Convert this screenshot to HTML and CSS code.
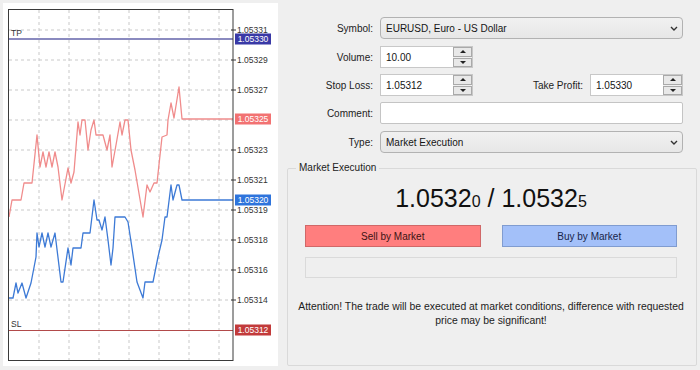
FILE: index.html
```html
<!DOCTYPE html>
<html lang="en">
<head>
<meta charset="utf-8">
<title>Order</title>
<link rel="stylesheet" href="styles.css">
</head>
<body>
<div class="app">
  <div class="chart-panel">
    <svg class="chart" width="275" height="363" viewBox="3 3 275 363" xmlns="http://www.w3.org/2000/svg">
      <g class="grid">
        <line x1="39" y1="10" x2="39" y2="360"/>
        <line x1="69" y1="10" x2="69" y2="360"/>
        <line x1="99" y1="10" x2="99" y2="360"/>
        <line x1="129" y1="10" x2="129" y2="360"/>
        <line x1="159" y1="10" x2="159" y2="360"/>
        <line x1="189" y1="10" x2="189" y2="360"/>
        <line x1="219" y1="10" x2="219" y2="360"/>
        <line x1="9" y1="30" x2="233" y2="30"/>
        <line x1="9" y1="60" x2="233" y2="60"/>
        <line x1="9" y1="90" x2="233" y2="90"/>
        <line x1="9" y1="120" x2="233" y2="120"/>
        <line x1="9" y1="150" x2="233" y2="150"/>
        <line x1="9" y1="180" x2="233" y2="180"/>
        <line x1="9" y1="210" x2="233" y2="210"/>
        <line x1="9" y1="240" x2="233" y2="240"/>
        <line x1="9" y1="270" x2="233" y2="270"/>
        <line x1="9" y1="300" x2="233" y2="300"/>
      </g>
      <line class="tp-line" x1="9" y1="39" x2="233" y2="39"/>
      <line class="sl-line" x1="9" y1="330.5" x2="233" y2="330.5"/>
      <polyline class="ask" points="9,217 12,200 21,200 24,183 32,183 37,135 40,167 43,152 46,167 49,152 52,167 55,152 58,167 62,200 68,168 71,183 74,172 78,122 80,135 82,120 85,120 88,150 91,130 94,120 96,135 103,135 107,150 110,135 112,167 116,145 120,122 122,135 125,120 128,120 131,150 135,170 143,217 147,185 150,192 154,183 157,183 162,137 167,135 168,120 171,103 174,118 179,87 182,119 233,119"/>
      <polyline class="bid" points="9,298 13,298 16,283 18,293 22,283 26,298 31,283 36,257 37,233 39,247 42,233 45,247 48,233 51,247 55,233 61,282 63,282 68,248 71,265 73,248 81,248 83,233 90,233 94,200 97,220 99,220 102,230 105,217 108,240 111,265 113,248 115,217 125,217 128,222 132,248 137,282 143,298 145,282 153,282 158,257 162,240 165,217 167,217 171,185 173,200 177,185 179,185 182,200 233,200"/>
      <rect class="frame" x="8.5" y="9.5" width="224.5" height="351"/>
      <g class="ticks">
        <line x1="231" y1="30" x2="236" y2="30"/>
        <line x1="231" y1="60" x2="236" y2="60"/>
        <line x1="231" y1="90" x2="236" y2="90"/>
        <line x1="231" y1="150" x2="236" y2="150"/>
        <line x1="231" y1="180" x2="236" y2="180"/>
        <line x1="231" y1="210" x2="236" y2="210"/>
        <line x1="231" y1="240" x2="236" y2="240"/>
        <line x1="231" y1="270" x2="236" y2="270"/>
        <line x1="231" y1="300" x2="236" y2="300"/>
      </g>
      <g class="axis">
        <text x="237" y="33">1.05331</text>
        <text x="237" y="63">1.05329</text>
        <text x="237" y="93">1.05327</text>
        <text x="237" y="153">1.05323</text>
        <text x="237" y="183">1.05321</text>
        <text x="237" y="213">1.05319</text>
        <text x="237" y="243">1.05318</text>
        <text x="237" y="273">1.05316</text>
        <text x="237" y="303">1.05314</text>
      </g>
      <text class="mark" x="11" y="36">TP</text>
      <text class="mark" x="11" y="327">SL</text>
      <g class="tag">
        <rect class="tag-tp" x="235" y="33.5" width="36" height="11"/>
        <text x="253" y="42">1.05330</text>
        <rect class="tag-ask" x="235" y="113.5" width="36" height="11"/>
        <text x="253" y="122">1.05325</text>
        <rect class="tag-bid" x="235" y="194.5" width="36" height="11"/>
        <text x="253" y="203">1.05320</text>
        <rect class="tag-sl" x="235" y="324.5" width="36" height="11"/>
        <text x="253" y="333">1.05312</text>
      </g>
    </svg>
  </div>

  <div class="side">
    <div class="form">
      <div class="label">Symbol:</div>
      <div class="select wide"><span>EURUSD, Euro - US Dollar</span><svg class="chev" width="8" height="5" viewBox="0 0 8 5"><polyline points="1,1 4,4 7,1"/></svg></div>

      <div class="label">Volume:</div>
      <div class="num"><span class="val">10.00</span><span class="spin"><span class="up"><i></i></span><span class="down"><i></i></span></span></div>

      <div class="label">Stop Loss:</div>
      <div class="num"><span class="val">1.05312</span><span class="spin"><span class="up"><i></i></span><span class="down"><i></i></span></span></div>
      <div class="label label-tp">Take Profit:</div>
      <div class="num"><span class="val">1.05330</span><span class="spin"><span class="up"><i></i></span><span class="down"><i></i></span></span></div>

      <div class="label">Comment:</div>
      <div class="field wide"></div>

      <div class="label">Type:</div>
      <div class="select wide"><span>Market Execution</span><svg class="chev" width="8" height="5" viewBox="0 0 8 5"><polyline points="1,1 4,4 7,1"/></svg></div>
    </div>

    <fieldset class="group">
      <legend>Market Execution</legend>
      <div class="group-body">
        <div class="price">1.0532<small>0</small> / 1.0532<small>5</small></div>
        <div class="trade">
          <div class="btn sell">Sell by Market</div>
          <div class="btn buy">Buy by Market</div>
        </div>
        <div class="status"></div>
        <p class="note">Attention! The trade will be executed at market conditions, difference with requested<br>price may be significant!</p>
      </div>
    </fieldset>
  </div>
</div>
</body>
</html>
```
FILE: styles.css
```css
html, body {
  margin: 0;
  padding: 0;
}

body {
  background: #efefef;
  font-family: "Liberation Sans", Arial, sans-serif;
  font-size: 10px;
  color: #1a1a1a;
}

.app {
  display: flex;
  gap: 6px;
  width: 700px;
  height: 370px;
  box-sizing: border-box;
  padding: 3px 3px 4px 3px;
}

/* ---------- chart ---------- */
.chart-panel {
  flex: none;
  width: 275px;
  background: #fff;
}

.chart {
  display: block;
}

.grid line {
  stroke: #c9c9c9;
  stroke-width: 1;
  stroke-dasharray: 3 3;
}

.tp-line {
  stroke: #8a8abf;
  stroke-width: 2;
}

.sl-line {
  stroke: #b24a4a;
  stroke-width: 1;
}

.ask {
  fill: none;
  stroke: #f08c8c;
  stroke-width: 1.3;
  stroke-linejoin: round;
}

.bid {
  fill: none;
  stroke: #3d7ad6;
  stroke-width: 1.3;
  stroke-linejoin: round;
}

.frame {
  fill: none;
  stroke: #3a3a3a;
  stroke-width: 1;
}

.ticks line {
  stroke: #3a3a3a;
  stroke-width: 1;
}

.axis text {
  font-family: "Liberation Sans", Arial, sans-serif;
  font-size: 8.5px;
  fill: #333;
}

.mark {
  font-family: "Liberation Sans", Arial, sans-serif;
  font-size: 8.5px;
  fill: #333;
}

.tag text {
  font-family: "Liberation Sans", Arial, sans-serif;
  font-size: 8.5px;
  fill: #fff;
  text-anchor: middle;
}

.tag-tp { fill: #3939a6; }
.tag-ask { fill: #f27272; }
.tag-bid { fill: #2e74dc; }
.tag-sl { fill: #c23b3b; }

/* ---------- form ---------- */
.side {
  flex: 1;
  display: flex;
  flex-direction: column;
  min-width: 0;
}

.form {
  display: grid;
  grid-template-columns: 89px 93px 1fr 93px;
  grid-template-rows: 23px 22px 22px 23px 22px;
  column-gap: 7px;
  row-gap: 6px;
  padding: 14px 14px 0 0;
}

.label {
  grid-column: 1;
  height: 22px;
  display: flex;
  align-items: center;
  justify-content: flex-end;
  color: #222;
}

.label-tp {
  grid-column: 3;
}

.wide {
  grid-column: 2 / 5;
}

.select {
  height: 22px;
  box-sizing: border-box;
  border: 1px solid #b2b2b2;
  border-radius: 4px;
  background: linear-gradient(#f1f1f1, #e7e7e7);
  display: flex;
  align-items: center;
  justify-content: space-between;
  padding: 0 4px 0 5px;
  color: #151515;
}

.chev polyline {
  fill: none;
  stroke: #333;
  stroke-width: 1.4;
}

.field {
  height: 22px;
  box-sizing: border-box;
  border: 1px solid #c4c4c4;
  border-radius: 2px;
  background: #fff;
}

.num {
  height: 22px;
  box-sizing: border-box;
  border: 1px solid #c8c8c8;
  background: #fff;
  display: flex;
  align-items: stretch;
}

.num .val {
  flex: 1;
  display: flex;
  align-items: center;
  padding-left: 5px;
  color: #151515;
}

.spin {
  width: 19px;
  display: flex;
  flex-direction: column;
  gap: 1px;
  background: #f0f0f0;
}

.spin > span {
  flex: 1;
  border: 1px solid #a9a9a9;
  background: #e8e8e8;
  display: flex;
  align-items: center;
  justify-content: center;
}

.spin i {
  width: 0;
  height: 0;
  border-left: 3px solid transparent;
  border-right: 3px solid transparent;
}

.spin .up i {
  border-bottom: 3px solid #222;
}

.spin .down i {
  border-top: 3px solid #222;
}

/* ---------- group ---------- */
.group {
  flex: 1;
  margin: 9px 0 0 3px;
  padding: 0;
  border: 1px solid #d9d9d9;
  border-radius: 2px;
  min-width: 0;
}

.group legend {
  margin-left: 8px;
  padding: 0 3px;
  font-size: 10px;
  line-height: 12px;
  color: #222;
}

.group-body {
  padding: 9px 19px 0 17px;
}

.price {
  text-align: center;
  font-size: 25px;
  line-height: 30px;
  color: #111;
}

.price small {
  font-size: 16px;
}

.trade {
  display: grid;
  grid-template-columns: 1fr 1fr;
  column-gap: 21px;
  margin-top: 8px;
}

.btn {
  height: 22px;
  box-sizing: border-box;
  border: 1px solid;
  display: flex;
  align-items: center;
  justify-content: center;
}

.sell {
  background: #ff7e7e;
  border-color: #d06868;
  color: #3b1414;
}

.buy {
  background: #a3c0f9;
  border-color: #809cd0;
  color: #17254a;
}

.status {
  height: 21px;
  margin-top: 10px;
  box-sizing: border-box;
  border: 1px solid #dadada;
}

.note {
  margin: 22px -12px 0;
  text-align: center;
  font-size: 10.4px;
  line-height: 14px;
  color: #1c1c1c;
  white-space: nowrap;
}
```
